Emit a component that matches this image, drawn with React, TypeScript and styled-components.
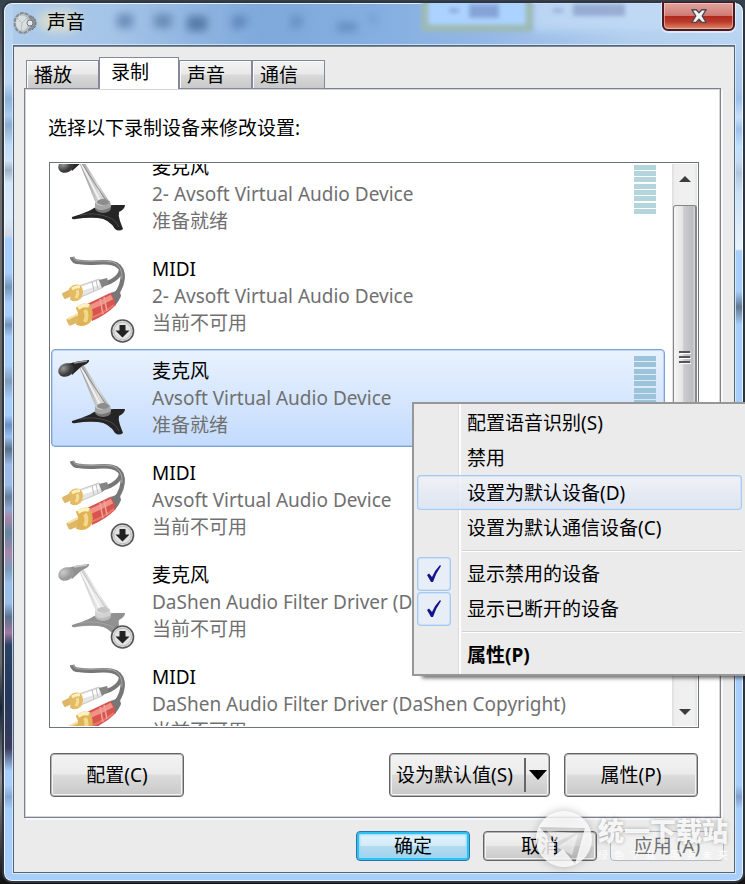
import React from 'react';
import styled, { createGlobalStyle, css } from 'styled-components';

const GlobalStyle = createGlobalStyle`
  * { box-sizing: border-box; }
  body {
    margin: 0;
    font-family: 'Noto Sans', 'Noto Sans CJK SC', sans-serif;
    font-size: 19px;
    line-height: 26px;
    color: #000;
  }
  button { font: inherit; color: inherit; padding: 0; margin: 0; cursor: default; white-space: nowrap; }
`;

const Desktop = styled.div`
  position: relative;
  height: 100vh;
  min-height: 640px;
  padding: 1px 0 1px 2px;
  display: flex;
  overflow: hidden;
  background: linear-gradient(#35404d, #777 10%, #666 45%, #6b6b6b 75%, #14243f 80%, #8c8c8c 88%, #111);
`;

const leftGlass = `linear-gradient(
  #b4d0ee 0, #bcd8f4 80px, #8eb2d8 96px, #a8ccf0 112px, #8eaccc 122px, #bfdcf8 142px, #cfe2f5 158px,
  #a0b3c5 167px, #d4e8fa 180px, #dcebf9 215px, #cfdae6 232px, #a8cffb 236px, #a8cffb 270px,
  #7595b8 284px, #a8cffb 300px, #a8cffb 312px, #7391b8 322px, #a8cffb 334px, #a8cffb 362px,
  #7f9cbe 378px, #a8cffb 396px, #a8cffb 412px, #6c8fc4 422px, #9cc0f0 434px, #5a708a 446px,
  #9cbbe6 462px, #9cbbe6 482px, #647d9a 494px, #8fa8d0 506px, #a987ab 515px, #64879f 530px,
  #a987ab 550px, #7d9bbb 566px, #9cbfe9 580px, #9cbfe9 600px, #5b728f 614px, #a07aa0 630px,
  #2b4265 642px, #23385a 690px, #3a3a5c 745px, #a8cffb 768px, #a8cffb 782px, #86a6d0 794px,
  #a8cffb 806px, #a8cffb 100%)`;

const rightGlass = `linear-gradient(
  #c4dcf4 0, #a9c8ee 84px, #9dc0ec 96px, #c6e0fa 114px, #9fc2ea 126px, #c2e0fe 144px, #c2dcf6 158px,
  #b0c6dc 170px, #c8e0f6 188px, #e8f3fd 246px, #a8cffb 248px, #a8cffb 288px, #5f7893 304px,
  #a8cffb 322px, #a8cffb 782px, #7f9fc8 794px, #a8cffb 806px, #a8cffb 100%)`;

const Frame = styled.section`
  flex: 1;
  min-width: 0;
  display: flex;
  flex-direction: column;
  padding: 0 8px 8px 9px;
  border: 2px solid #30363f;
  border-radius: 10px;
  box-shadow: inset 0 0 0 1px rgba(255, 255, 255, 0.75);
  background:
    ${leftGlass} left top / 9px 100% no-repeat padding-box,
    ${rightGlass} right top / 8px 100% no-repeat padding-box,
    linear-gradient(90deg, #aecbea, #a4c4e8 15%, #7fa9db 35%, #84afe0 50%, #93b7e6 65%, #b2cfee 85%, #b9d5f2) left top / 100% 44px no-repeat padding-box,
    #a8cffb;
`;

const TitleBar = styled.header`
  position: relative;
  flex: none;
  height: 42px;
  display: flex;
  align-items: flex-start;
`;

const GlassReflection = styled.svg`
  position: absolute;
  left: 0;
  top: 0;
  width: 100%;
  height: 41px;
`;

const AppIcon = styled.svg`
  position: relative;
  flex: none;
  width: 24px;
  height: 24px;
  margin-top: 8px;
`;

const Title = styled.h1`
  position: relative;
  flex: 1;
  margin: 6px 0 0 10px;
  font-size: 19px;
  line-height: 26px;
  font-weight: 400;
`;

const CloseButton = styled.button`
  position: relative;
  width: 73px;
  height: 29px;
  margin-top: -1px;
  display: grid;
  place-items: center;
  border: 2px solid #4b1a1e;
  border-top-width: 1px;
  border-radius: 0 0 6px 6px;
  background: linear-gradient(#e2a59f, #cf7a72 48%, #b0291f 50%, #bc3a2a 72%, #dd8a6c);
  box-shadow: inset 0 0 0 1px rgba(255, 215, 205, 0.55), 0 1px 0 1px rgba(255, 255, 255, 0.5);
  svg { width: 18px; height: 16px; }
`;

const Client = styled.div`
  flex: 1;
  min-height: 0;
  display: flex;
  flex-direction: column;
  padding: 11px 10px 11px 10px;
  border: 1px solid #53657a;
  box-shadow: 0 0 0 1px rgba(225, 238, 250, 0.8), inset 0 1px 0 #7d8a98;
  background: #ebebeb;
`;

const TabList = styled.div`
  flex: none;
  display: flex;
  align-items: flex-end;
  height: 32px;
  margin-bottom: -1px;
  padding-left: 2px;
  z-index: 1;
`;

const Tab = styled.button<{ $active?: boolean }>`
  width: 73px;
  height: 29px;
  padding: 1px 0 0 7px;
  text-align: left;
  border: 1px solid #85889a;
  background: linear-gradient(#f3f3f3, #e9e9e9 48%, #d9d9d9 52%, #c9c9c9);
  box-shadow: inset 1px 1px 0 #fafafa;
  ${(p) => p.$active && css`
    width: 80px;
    height: 32px;
    padding: 0 0 3px 11px;
    border-bottom: 0;
    background: #fff;
    box-shadow: none;
  `}
`;

const Panel = styled.main`
  flex: 1;
  min-height: 0;
  display: flex;
  flex-direction: column;
  margin-right: 3px;
  padding: 26px 21px 20px 24px;
  border: 1px solid #7f828e;
  background: #fff;
  box-shadow: 2px 2px 0 #f8f8f8, inset 0 0 0 1px #d3d4d8;
`;

const Prompt = styled.p`
  margin: 0 0 21px -1px;
`;

const ListFrame = styled.div`
  flex: 1 1 0;
  min-height: 0;
  display: flex;
  gap: 7px;
  padding: 1px;
  border: 1px solid #6c7480;
  overflow: hidden;
`;

const ListViewport = styled.div`
  flex: 1;
  min-width: 0;
  overflow: hidden;
`;

const DeviceList = styled.ul`
  margin: -19px 0 0;
  padding: 0;
  list-style: none;
`;

const Device = styled.li<{ $selected?: boolean }>`
  height: 98px;
  margin-bottom: 4px;
  display: flex;
  padding: 5px 8px 0 4px;
  border: 1px solid transparent;
  border-radius: 4px;
  ${(p) => p.$selected && css`
    border-color: #7da2ce;
    background: linear-gradient(#e9f2fe, #c3dbfd);
    box-shadow: inset 0 0 0 1px rgba(125, 175, 245, 0.4);
  `}
`;

const DeviceIcon = styled.svg`
  flex: none;
  width: 96px;
  height: 92px;
`;

const DeviceText = styled.div`
  flex: 1;
  min-width: 0;
  padding-top: 3px;
  white-space: nowrap;
  color: #707070;
  line-height: 27px;
`;

const DeviceName = styled.div`
  color: #000;
`;

const Meter = styled.div<{ $strong?: boolean }>`
  width: 22px;
  height: 62px;
  margin-top: 1px;
  display: flex;
  flex-direction: column;
  justify-content: space-between;
  span {
    height: 5px;
    background: ${(p) => (p.$strong ? '#9bc3d9' : '#b5d5dc')};
  }
`;

const ScrollBar = styled.div`
  flex: none;
  width: 25px;
  display: flex;
  flex-direction: column;
  background: linear-gradient(90deg, #dedede, #efefef 12%, #f0f0f0 88%, #e2e2e2);
`;

const ScrollButton = styled.button`
  flex: none;
  height: 41px;
  display: grid;
  place-items: center;
  border: 0;
  background: none;
  &:first-child { padding-bottom: 12px; }
  &:last-child { margin-top: auto; padding-top: 12px; }
`;

const Thumb = styled.div`
  height: 304px;
  margin-left: 1px;
  display: grid;
  place-items: center;
  border: 1px solid #87878b;
  border-right-width: 2px;
  border-radius: 3px;
  background: linear-gradient(90deg, #f5f5f5, #e4e4e6 42%, #cdccd1 46%, #bdbcc2 88%, #dadadd);
  svg { width: 12px; height: 14px; }
`;

const buttonFace = css`
  border: 1px solid #646464;
  border-radius: 4px;
  background: linear-gradient(#f3f3f3, #ebebeb 48%, #dcdcdc 50%, #c8c8c8);
  box-shadow: inset 0 0 0 1px #b4b4b4, inset 0 0 0 2px #f4f4f4;
`;

const ButtonRow = styled.div`
  flex: none;
  display: flex;
  gap: 14px;
  margin: 25px 1px 0;
`;

const Button = styled.button`
  ${buttonFace}
  width: 134px;
  height: 44px;
`;

const SplitButton = styled.div`
  ${buttonFace}
  height: 44px;
  width: 161px;
  margin-left: auto;
  padding-left: 6px;
  display: flex;
  align-items: center;
  button { border: 0; background: none; }
`;

const SplitMain = styled.button`
  flex: 1;
  text-align: left;
`;

const SplitArrow = styled.button`
  && { border-left: 2px solid #666; }
  width: 25px;
  height: 34px;
  display: grid;
  place-items: center;
`;

const Footer = styled.footer`
  flex: none;
  display: flex;
  justify-content: flex-end;
  gap: 13px;
  padding-top: 13px;
`;

const DialogButton = styled.button<{ $primary?: boolean }>`
  ${buttonFace}
  width: 114px;
  height: 30px;
  line-height: 26px;
  ${(p) => p.$primary && css`
    border-color: #33729f;
    background: linear-gradient(#e6f4fc, #d3ebf9 48%, #b3dcf2 50%, #a0d0ec);
    box-shadow: inset 0 0 0 2px #2cc2f5, inset 0 0 2px 3px #8fdcf8;
  `}
  &:disabled {
    color: #6e6e6e;
    border-color: #b4b8bc;
    background: #f1f1f1;
    box-shadow: none;
  }
`;

const ContextMenu = styled.div`
  position: absolute;
  top: 402px;
  left: 412px;
  right: 0;
  z-index: 3;
  padding: 1px 3px 2px 3px;
  border: 2px solid #979797;
  border-right: 0;
  background: linear-gradient(90deg, transparent 44px, #dcdcdc 44px, #dcdcdc 45px, #fff 45px, #fff 47px, transparent 47px) #ebebeb;
  box-shadow: 8px 4px 4px -2px rgba(0, 0, 0, 0.6);
`;

const MenuItem = styled.button<{ $hot?: boolean; $strong?: boolean }>`
  width: 100%;
  height: 35px;
  display: flex;
  align-items: center;
  gap: 16px;
  border: 0;
  background: none;
  text-align: left;
  font-weight: ${(p) => (p.$strong ? 700 : 400)};
  ${(p) => p.$hot && css`
    border-radius: 4px;
    background: linear-gradient(rgba(240, 243, 248, 0.8), rgba(218, 227, 242, 0.8));
    box-shadow: inset 0 0 0 1px #a5caf8, inset 0 0 0 2px #d3e3f8;
  `}
`;

const CheckSlot = styled.span<{ $checked?: boolean }>`
  width: 34px;
  height: 34px;
  display: grid;
  place-items: center;
  border-radius: 4px;
  ${(p) => p.$checked && css`
    background: #e8eef7;
    box-shadow: inset 0 0 0 1px #a5caf8, inset 0 0 0 2px #cfe1f8;
  `}
`;

const Separator = styled.hr`
  height: 2px;
  margin: 5px 0 4px 45px;
  border: 0;
  border-top: 1px solid #d2d2d2;
  border-bottom: 1px solid #fff;
`;

const Watermark = styled.div`
  position: absolute;
  right: 17px;
  bottom: 16px;
  z-index: 2;
  display: flex;
  align-items: center;
  gap: 5px;
  color: rgba(255, 255, 255, 0.9);
  pointer-events: none;
  svg { width: 58px; height: 58px; filter: drop-shadow(0 0 4px rgba(0, 0, 0, 0.3)); }
`;

const Brand = styled.div`
  font-size: 26px;
  line-height: 32px;
  font-weight: 900;
  text-shadow: 0 0 4px rgba(0, 0, 0, 0.3);
`;

const Slogan = styled.div`
  display: flex;
  justify-content: space-between;
  font-size: 10px;
  line-height: 16px;
`;

const Mic = ({ faded }: { faded?: boolean }) => (
  <g opacity={faded ? 0.5 : 1}>
    <path d="M16 66 C29 62 36 59 41 55 L58 54 L69 54 Q69 58 63 61 Q62 65 64 70 L67 78 Q63 81 59 78 Q53 68 42 67 Q31 66 20 68 Q15 69 16 66Z" fill="#252525" />
    <path d="M24 64 Q39 61 52 66 Q59 68 63 76" fill="none" stroke="#606060" strokeWidth="1" opacity=".6" />
    <ellipse cx="47" cy="57" rx="8" ry="5" fill="#777" />
    <path d="M39 52 L39 57 Q46 62 55 56 L54 50Z" fill="#a6a6a6" />
    <path d="M23 11 L27 9 L53 50 Q47 57 40 53Z" fill="url(#stem)" />
    <path d="M25 12 L45 52" stroke="#f2f2f2" strokeWidth="2" />
    <path d="M25 11 L51 51" stroke="#8a8a8a" strokeWidth="1" />
    <ellipse cx="47" cy="51" rx="6" ry="3" fill="#8c8c8c" />
    <path d="M12 9 Q20 6 33 5 Q34 8 26 11 L16 20Z" fill="#262626" />
    <path d="M18 8 L31 6" stroke="#999" strokeWidth="1.5" />
    <ellipse cx="10" cy="15" rx="8" ry="6.5" transform="rotate(-28 10 15)" fill="url(#head)" />
  </g>
);

const Plugs = () => (
  <g strokeLinejoin="round">
    <path d="M16 4 Q17 9 24 9 C35 11 48 8 56 10 C69 13 70 27 60 42" fill="none" stroke="#777" strokeWidth="4.5" />
    <path d="M65 16 Q64 27 45 32" fill="none" stroke="#777" strokeWidth="4" />
    <path d="M17 4 Q18 8 25 8 C37 9 48 7 57 9 Q67 13 66 26" fill="none" stroke="#aaa" strokeWidth="1" />
    <path d="M23 33 L43 26 Q48 29 46 35 L25 44Z" fill="#e6e6e6" stroke="#c8c8c8" />
    <path d="M25 36 L43 30" stroke="#fff" strokeWidth="4" />
    <path d="M36 28.5 L38 38 M40 27 L42 36" stroke="#bdbdbd" />
    <path d="M43 27 L51 25 L53 30 L46 35Z" fill="#858585" />
    <path d="M7 41 L16 36.5 L18 41 L9 45Z" fill="#deb768" stroke="#deb768" strokeWidth="2" />
    <path d="M14 36 Q18 31 24 33 Q28 39 24 45 Q19 49 15 46 Q17 41 14 36Z" fill="#e3bb64" stroke="#e3bb64" strokeWidth="2" />
    <path d="M16 36 Q20 33 24 34" fill="none" stroke="#fdf0c0" strokeWidth="3" />
    <path d="M21 37 Q23 40 20 45" fill="none" stroke="#f6dc96" strokeWidth="3" />
    <path d="M31 51 L54 40 Q61 43 60 52 Q50 62 36 68Z" fill="#d9544e" />
    <path d="M33 55 Q45 50 56 44" fill="none" stroke="#f19289" strokeWidth="5" />
    <path d="M35 65 Q48 60 58 52" fill="none" stroke="#e87a70" strokeWidth="2" />
    <path d="M44 46 L47 61 M48 44 L51 58" stroke="#eda49c" strokeWidth="1.5" />
    <path d="M54 40 Q60 39 63 35 L65 43 Q62 50 59 52 Q59 44 54 40Z" fill="#777" />
    <path d="M12 67 L24 61 L26 66 L14 71Z" fill="#deb768" stroke="#deb768" strokeWidth="3" />
    <path d="M12 66 L22 61" stroke="#f8e3a6" strokeWidth="2" />
    <path d="M21 55 Q26 50 33 52 Q38 60 34 68 Q28 74 21 71 Q26 64 21 55Z" fill="#dfb355" stroke="#dfb355" strokeWidth="2" />
    <path d="M22 55 Q28 51 33 53" fill="none" stroke="#fdf0c0" strokeWidth="4" />
    <path d="M29 57 Q32 62 29 69" fill="none" stroke="#f4d78c" strokeWidth="4" />
  </g>
);

const DownBadge = () => (
  <g>
    <circle cx="66.5" cy="78" r="11" fill="#e3e3e3" stroke="#555" strokeWidth="1.6" />
    <circle cx="66.5" cy="78" r="8.8" fill="none" stroke="#b9b9b9" />
    <path d="M63.5 72 h6 v5.5 h4 L66.5 84.5 L59.5 77.5 h4Z" fill="#222" />
  </g>
);

type DeviceInfo = { kind: 'mic' | 'midi'; name: string; driver: string; state: string; off?: boolean; selected?: boolean };

const devices: DeviceInfo[] = [
  { kind: 'mic', name: '麦克风', driver: '2- Avsoft Virtual Audio Device', state: '准备就绪' },
  { kind: 'midi', name: 'MIDI', driver: '2- Avsoft Virtual Audio Device', state: '当前不可用', off: true },
  { kind: 'mic', name: '麦克风', driver: 'Avsoft Virtual Audio Device', state: '准备就绪', selected: true },
  { kind: 'midi', name: 'MIDI', driver: 'Avsoft Virtual Audio Device', state: '当前不可用', off: true },
  { kind: 'mic', name: '麦克风', driver: 'DaShen Audio Filter Driver (DaShen Copyright)', state: '当前不可用', off: true },
  { kind: 'midi', name: 'MIDI', driver: 'DaShen Audio Filter Driver (DaShen Copyright)', state: '当前不可用', off: true },
];

const tabs = ['播放', '录制', '声音', '通信'];

const Check = () => (
  <svg width="16" height="20" viewBox="0 0 16 20" aria-hidden="true">
    <path d="M1 11 L3 9.5 L6 13 Q9 6 14 1 L15 2 Q10 9 7 18 L5 18Z" fill="#14148c" />
  </svg>
);

export default function App() {
  return (
    <Desktop>
      <GlobalStyle />
      <Frame aria-label="声音">
        <TitleBar>
          <GlassReflection aria-hidden="true">
            <defs>
              <filter id="soft" x="-50%" y="-50%" width="200%" height="200%"><feGaussianBlur stdDeviation="4" /></filter>
              <filter id="edge" x="-20%" y="-50%" width="140%" height="200%"><feGaussianBlur stdDeviation="2" /></filter>
            </defs>
            <g filter="url(#soft)">
              <ellipse cx="46" cy="18" rx="22" ry="12" fill="#dfe0cc" opacity=".8" />
              <rect x="104" y="11" width="16" height="14" fill="#5c80ab" opacity=".8" />
              <rect x="141" y="11" width="18" height="14" fill="#5c80ab" opacity=".8" />
              <rect x="174" y="13" width="20" height="15" fill="#4a6f9f" opacity=".85" />
              <path d="M220 12 H232 L236 19 L228 26 H218Z" fill="#5780b4" opacity=".8" />
              <path d="M278 12 H286 L292 18 L284 26 H278Z" fill="#5780b4" opacity=".65" />
              <rect x="324" y="20" width="20" height="8" fill="#5079ad" opacity=".7" />
              <rect x="355" y="10" width="10" height="12" fill="#6f97d4" opacity=".6" />
              <rect x="520" y="-6" width="140" height="34" fill="#c2dbf6" opacity=".8" />
            </g>
            <g filter="url(#edge)">
              <rect x="412" y="-12" width="104" height="37" fill="#acd3ff" stroke="#9ebbb2" strokeWidth="7" />
              <rect x="436" y="5" width="10" height="5" fill="#7592cb" opacity=".6" />
              <rect x="456" y="1" width="30" height="14" fill="#7189c3" opacity=".65" />
              <rect x="540" y="5" width="10" height="5" fill="#7f98c8" opacity=".5" />
              <rect x="560" y="1" width="52" height="12" fill="#7d91bc" opacity=".6" />
            </g>
          </GlassReflection>
          <AppIcon viewBox="0 0 24 24" aria-hidden="true">
            <ellipse cx="17" cy="12" rx="6" ry="7" fill="#8b9197" stroke="#62686e" strokeDasharray="2 1" />
            <ellipse cx="10" cy="12" rx="8.5" ry="10" fill="#b9c0c5" stroke="#858b90" strokeWidth="2" strokeDasharray="4 1" />
            <ellipse cx="9" cy="12" rx="6" ry="7.5" fill="#d9dfe1" />
            <path d="M9 12 L3 6 M9 12 L15 6 M9 12 L8 20" stroke="#b7bdc1" />
            <circle cx="17" cy="12" r="3" fill="#e6e9eb" stroke="#73797d" />
          </AppIcon>
          <Title>声音</Title>
          <CloseButton aria-label="关闭">
            <svg viewBox="0 0 20 16" aria-hidden="true">
              <path d="M2 1 H7 L10 4.5 L13 1 H18 L13.5 8 L18 15 H13 L10 11.5 L7 15 H2 L6.5 8Z" fill="#f4f4f4" stroke="#4c4650" strokeWidth="1.5" strokeLinejoin="round" />
            </svg>
          </CloseButton>
        </TitleBar>
        <Client>
          <TabList role="tablist">
            {tabs.map((t, i) => (
              <Tab key={t} role="tab" aria-selected={i === 1} $active={i === 1}>{t}</Tab>
            ))}
          </TabList>
          <Panel>
            <Prompt id="prompt">选择以下录制设备来修改设置:</Prompt>
            <ListFrame>
              <ListViewport>
                <DeviceList role="listbox" aria-labelledby="prompt">
                  {devices.map((d, i) => (
                    <Device key={i} role="option" aria-selected={!!d.selected} $selected={d.selected}>
                      <DeviceIcon viewBox="0 0 96 92" aria-hidden="true">
                        <defs>
                          <linearGradient id="stem" x1="0" y1="0.3" x2="1" y2="0">
                            <stop offset="0" stopColor="#8b8b8b" />
                            <stop offset=".5" stopColor="#dedede" />
                            <stop offset="1" stopColor="#777" />
                          </linearGradient>
                          <radialGradient id="head" cx=".4" cy=".3">
                            <stop offset="0" stopColor="#999" />
                            <stop offset="1" stopColor="#3a3a3a" />
                          </radialGradient>
                        </defs>
                        {d.kind === 'mic' ? <Mic faded={d.off} /> : <Plugs />}
                        {d.off && <DownBadge />}
                      </DeviceIcon>
                      <DeviceText>
                        <DeviceName>{d.name}</DeviceName>
                        <div>{d.driver}</div>
                        <div>{d.state}</div>
                      </DeviceText>
                      {!d.off && (
                        <Meter $strong={d.selected} aria-hidden="true">
                          {Array.from({ length: 10 }, (_, n) => <span key={n} />)}
                        </Meter>
                      )}
                    </Device>
                  ))}
                </DeviceList>
              </ListViewport>
              <ScrollBar>
                <ScrollButton aria-label="向上滚动">
                  <svg width="12" height="6" viewBox="0 0 12 6"><path d="M0 6 L6 0 L12 6Z" fill="#3c3c3c" /></svg>
                </ScrollButton>
                <Thumb>
                  <svg viewBox="0 0 12 14" aria-hidden="true">
                    <path d="M0 2 H11 M0 7 H11 M0 12 H11" stroke="#555" strokeWidth="2" />
                    <path d="M1 3.5 H12 M1 8.5 H12 M1 13.5 H12" stroke="#fff" strokeWidth="1" />
                  </svg>
                </Thumb>
                <ScrollButton aria-label="向下滚动">
                  <svg width="12" height="6" viewBox="0 0 12 6"><path d="M0 0 L6 6 L12 0Z" fill="#3c3c3c" /></svg>
                </ScrollButton>
              </ScrollBar>
            </ListFrame>
            <ButtonRow>
              <Button>配置(C)</Button>
              <SplitButton>
                <SplitMain>设为默认值(S)</SplitMain>
                <SplitArrow aria-label="更多默认选项">
                  <svg width="18" height="10" viewBox="0 0 18 10"><path d="M0 0 H18 L9 10Z" fill="#000" /></svg>
                </SplitArrow>
              </SplitButton>
              <Button>属性(P)</Button>
            </ButtonRow>
          </Panel>
          <Footer>
            <DialogButton $primary>确定</DialogButton>
            <DialogButton>取消</DialogButton>
            <DialogButton disabled>应用 (A)</DialogButton>
          </Footer>
        </Client>
      </Frame>

      <Watermark>
        <svg viewBox="0 0 58 58" aria-hidden="true">
          <path fillRule="evenodd" d="M29 1 A28 28 0 1 1 28.9 1Z M4 17 L50 18 L40 54 L28 39 L19 46 L19 33Z" fill="rgba(255,255,255,.8)" />
          <path d="M12 21 L40 23 L22 32Z M22 37 L43 24 L37 45Z" fill="rgba(255,255,255,.5)" />
        </svg>
        <div>
          <Brand>统一下载站</Brand>
          <Slogan>{[...'绿色下载·服务未来'].map((c, i) => <span key={i}>{c}</span>)}</Slogan>
        </div>
      </Watermark>

      <ContextMenu role="menu">
        <MenuItem role="menuitem"><CheckSlot />配置语音识别(S)</MenuItem>
        <MenuItem role="menuitem"><CheckSlot />禁用</MenuItem>
        <MenuItem role="menuitem" $hot><CheckSlot />设置为默认设备(D)</MenuItem>
        <MenuItem role="menuitem"><CheckSlot />设置为默认通信设备(C)</MenuItem>
        <Separator />
        <MenuItem role="menuitemcheckbox" aria-checked="true"><CheckSlot $checked><Check /></CheckSlot>显示禁用的设备</MenuItem>
        <MenuItem role="menuitemcheckbox" aria-checked="true"><CheckSlot $checked><Check /></CheckSlot>显示已断开的设备</MenuItem>
        <Separator />
        <MenuItem role="menuitem" $strong><CheckSlot />属性(P)</MenuItem>
      </ContextMenu>
    </Desktop>
  );
}
